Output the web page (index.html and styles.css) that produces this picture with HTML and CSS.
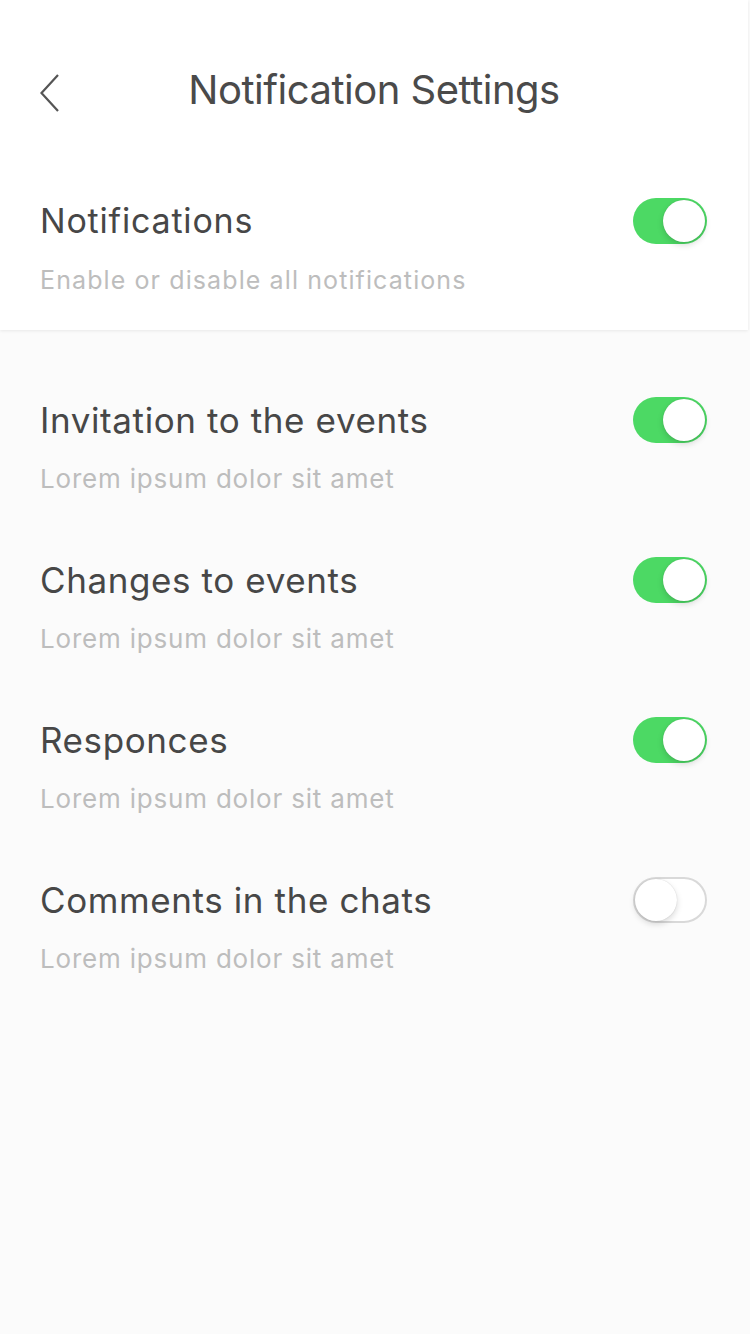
FILE: index.html
```html
<!DOCTYPE html>
<html>
<head>
<meta charset="utf-8">
<link rel="stylesheet" href="styles.css">
</head>
<body>
<div class="page">
  <div class="card">
    <div class="header">
      <svg class="back" width="20" height="38" viewBox="0 0 20 38"><polyline points="18,1 1.5,19 18,37" fill="none" stroke="#555" stroke-width="2.2" stroke-linejoin="miter"/></svg>
      <h1 class="title">Notification Settings</h1>
    </div>
    <div class="row row-main">
      <div class="texts">
        <div class="label label-main">Notifications</div>
        <div class="sub sub-main">Enable or disable all notifications</div>
      </div>
      <div class="switch on"><div class="knob"></div></div>
    </div>
  </div>
  <div class="list">
    <div class="row">
      <div class="texts">
        <div class="label">Invitation to the events</div>
        <div class="sub">Lorem ipsum dolor sit amet</div>
      </div>
      <div class="switch on"><div class="knob"></div></div>
    </div>
    <div class="row">
      <div class="texts">
        <div class="label">Changes to events</div>
        <div class="sub">Lorem ipsum dolor sit amet</div>
      </div>
      <div class="switch on"><div class="knob"></div></div>
    </div>
    <div class="row">
      <div class="texts">
        <div class="label">Responces</div>
        <div class="sub">Lorem ipsum dolor sit amet</div>
      </div>
      <div class="switch on"><div class="knob"></div></div>
    </div>
    <div class="row">
      <div class="texts">
        <div class="label">Comments in the chats</div>
        <div class="sub">Lorem ipsum dolor sit amet</div>
      </div>
      <div class="switch off"><div class="knob"></div></div>
    </div>
  </div>
</div>
</body>
</html>
```
FILE: styles.css
```css
* { box-sizing: border-box; }
html, body { margin: 0; padding: 0; }
body {
  width: 750px;
  height: 1334px;
  background: #fbfbfb;
  font-family: Inter, "Noto Sans", sans-serif;
  color: #474747;
  overflow: hidden;
}
.page { width: 750px; height: 1334px; }
.card {
  background: #fff;
  width: 748px;
  height: 330px;
  box-shadow: 0 1px 3px rgba(0,0,0,0.08);
  position: relative;
  z-index: 1;
}
.header {
  height: 150px;
  padding-top: 65px;
  display: flex;
  justify-content: center;
  position: relative;
}
.header .back {
  position: absolute;
  left: 40px;
  top: 74px;
}
.title {
  margin: 0;
  font-weight: 400;
  font-size: 40px;
  line-height: 50px;
  height: 50px;
  letter-spacing: -0.5px;
  color: #4a4a4a;
}
.row {
  display: flex;
  justify-content: space-between;
  align-items: flex-start;
  padding: 0 43px 0 40px;
  height: 160px;
}
.row-main { height: 180px; padding-top: 51px; padding-right: 41px; }
.texts { display: flex; flex-direction: column; }
.label {
  font-size: 35px;
  line-height: 40px;
  color: #474747;
  letter-spacing: 0.6px;
}
.label-main {
  font-size: 34px;
  letter-spacing: 0.8px;
}
.sub {
  font-size: 26px;
  line-height: 30px;
  margin-top: 24px;
  color: #bdbdbd;
  letter-spacing: 0.8px;
}
.sub-main {
  font-size: 25px;
  letter-spacing: 1.1px;
}
.list { padding-top: 70px; }
.switch {
  width: 74px;
  height: 46px;
  border-radius: 23px;
  position: relative;
  margin-top: -3px;
  flex: none;
}
.switch.on { background: #4cd964; }
.switch.off { background: #fff; border: 2px solid #d9d9d9; }
.knob {
  position: absolute;
  top: 2px;
  right: 2px;
  width: 42px;
  height: 42px;
  border-radius: 50%;
  background: #fff;
  box-shadow: 0 3px 6px rgba(0,0,0,0.15), 0 0 1px rgba(0,0,0,0.2);
}
.switch.off .knob {
  top: 0;
  left: 0;
  right: auto;
}
```
